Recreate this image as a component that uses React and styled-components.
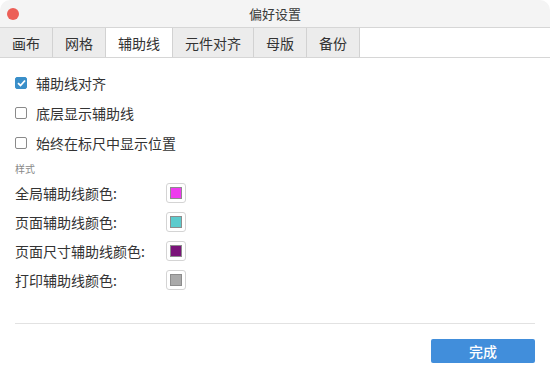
import React from "react";
import styled, { createGlobalStyle } from "styled-components";

const GlobalStyle = createGlobalStyle`
  body {
    margin: 0;
    background: #ffffff;
    font-family: "Noto Sans CJK SC", "Noto Sans", "Liberation Sans", sans-serif;
  }
`;

const Window = styled.div`
  width: 550px;
  height: 378px;
  background: #ffffff;
  border-radius: 10px;
  overflow: hidden;
  display: flex;
  flex-direction: column;
  color: #333;
`;

const TitleBar = styled.div`
  height: 28px;
  background: #f4f4f4;
  border-bottom: 1px solid #d6d6d6;
  box-sizing: border-box;
  display: grid;
  grid-template-columns: 60px 1fr 60px;
  align-items: center;
`;

const CloseDot = styled.span`
  width: 12px;
  height: 12px;
  border-radius: 50%;
  background: #ec5f57;
  margin-left: 7px;
`;

const Title = styled.div`
  text-align: center;
  font-size: 13px;
  color: #3a3a3a;
`;

const TabBar = styled.div`
  display: flex;
  height: 30px;
  box-sizing: border-box;
  border-bottom: 1px solid #d6d6d6;
`;

const Tab = styled.div`
  padding: 0 12px;
  display: flex;
  align-items: center;
  font-size: 14px;
  color: #333;
  background: ${(p) => (p.$active ? "#ffffff" : "#ececec")};
  border-right: 1px solid #d2d2d2;
`;

const Content = styled.div`
  flex: 1;
  padding: 10px 15px 0;
`;

const CheckRow = styled.label`
  height: 30px;
  display: flex;
  align-items: center;
  gap: 9px;
  font-size: 14px;
`;

const Box = styled.span`
  width: 12px;
  height: 12px;
  box-sizing: border-box;
  border-radius: 2px;
  border: 1px solid ${(p) => (p.$checked ? "#3a8fc9" : "#8a8a8a")};
  background: ${(p) => (p.$checked ? "#3a8fc9" : "#ffffff")};
  display: flex;
  align-items: center;
  justify-content: center;
`;

const SectionLabel = styled.div`
  font-size: 10px;
  color: #888;
  line-height: 14px;
  margin: 4px 0 2px;
`;

const ColorRow = styled.div`
  display: grid;
  grid-template-columns: 151px 20px;
  align-items: center;
  height: 29px;
  font-size: 14px;
`;

const Swatch = styled.span`
  width: 20px;
  height: 20px;
  box-sizing: border-box;
  border: 1px solid #d4d4d4;
  border-radius: 3px;
  display: flex;
  align-items: center;
  justify-content: center;
  &::after {
    content: "";
    width: 12px;
    height: 12px;
    box-sizing: border-box;
    border: 1px solid #8c8c8c;
    background: ${(p) => p.$color};
  }
`;

const Footer = styled.div`
  margin: 0 15px;
  padding: 15px 0;
  border-top: 1px solid #e2e2e2;
  display: flex;
  justify-content: flex-end;
`;

const DoneButton = styled.button`
  width: 104px;
  height: 24px;
  border: none;
  border-radius: 2px;
  background: #418edb;
  color: #ffffff;
  font-family: inherit;
  font-size: 14px;
  font-weight: 500;
  padding: 0;
`;

const tabs = ["画布", "网格", "辅助线", "元件对齐", "母版", "备份"];

const checks = [
  { label: "辅助线对齐", checked: true },
  { label: "底层显示辅助线", checked: false },
  { label: "始终在标尺中显示位置", checked: false },
];

const colors = [
  { label: "全局辅助线颜色:", color: "#ee3bee" },
  { label: "页面辅助线颜色:", color: "#5ccbcd" },
  { label: "页面尺寸辅助线颜色:", color: "#7a1479" },
  { label: "打印辅助线颜色:", color: "#a9a9a9" },
];

export default function App() {
  return (
    <>
      <GlobalStyle />
      <Window>
        <TitleBar>
          <CloseDot />
          <Title>偏好设置</Title>
          <span />
        </TitleBar>
        <TabBar>
          {tabs.map((t) => (
            <Tab key={t} $active={t === "辅助线"}>
              {t}
            </Tab>
          ))}
        </TabBar>
        <Content>
          {checks.map((c) => (
            <CheckRow key={c.label}>
              <Box $checked={c.checked}>
                {c.checked && (
                  <svg width="9" height="8" viewBox="0 0 9 8">
                    <path
                      d="M1 4.2 L3.5 6.5 L8 1.5"
                      fill="none"
                      stroke="#fff"
                      strokeWidth="1.8"
                    />
                  </svg>
                )}
              </Box>
              {c.label}
            </CheckRow>
          ))}
          <SectionLabel>样式</SectionLabel>
          {colors.map((c) => (
            <ColorRow key={c.label}>
              <span>{c.label}</span>
              <Swatch $color={c.color} />
            </ColorRow>
          ))}
        </Content>
        <Footer>
          <DoneButton>完成</DoneButton>
        </Footer>
      </Window>
    </>
  );
}
